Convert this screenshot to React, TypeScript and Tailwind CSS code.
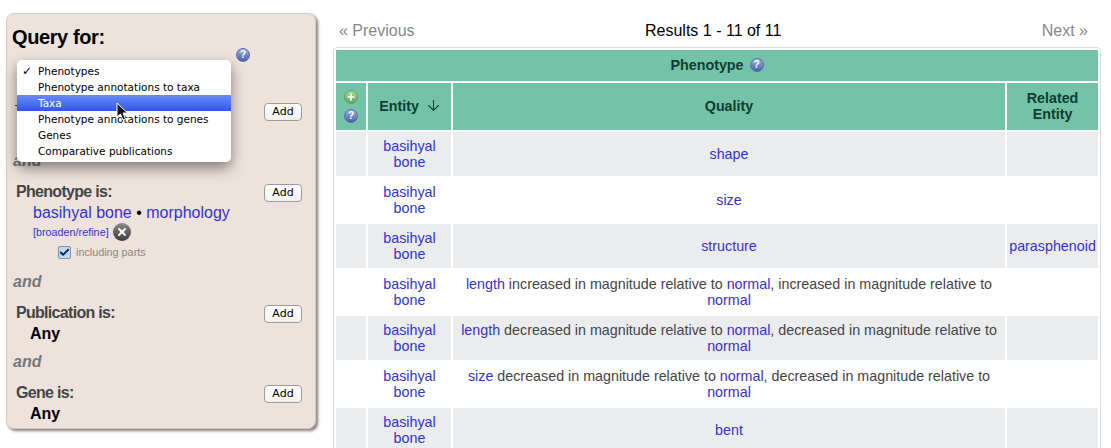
import { X, Plus, ArrowDown, Check } from 'lucide-react';

const SANS = { fontFamily: '"Liberation Sans", Arial, sans-serif' };

const MENU_ITEMS = [
  'Phenotypes',
  'Phenotype annotations to taxa',
  'Taxa',
  'Phenotype annotations to genes',
  'Genes',
  'Comparative publications',
];

const ROWS = [
  { quality: [['shape', true]], related: '' },
  { quality: [['size', true]], related: '' },
  { quality: [['structure', true]], related: 'parasphenoid' },
  {
    quality: [
      ['length', true],
      [' increased in magnitude relative to ', false],
      ['normal', true],
      [', increased in magnitude relative to ', false],
      ['normal', true],
    ],
    related: '',
  },
  {
    quality: [
      ['length', true],
      [' decreased in magnitude relative to ', false],
      ['normal', true],
      [', decreased in magnitude relative to ', false],
      ['normal', true],
    ],
    related: '',
  },
  {
    quality: [
      ['size', true],
      [' decreased in magnitude relative to ', false],
      ['normal', true],
      [', decreased in magnitude relative to ', false],
      ['normal', true],
    ],
    related: '',
  },
  { quality: [['bent', true]], related: '' },
] as const;

function HelpIcon() {
  return (
    <span className="flex h-[14px] w-[14px] items-center justify-center rounded-full border border-[#5a70a8] bg-gradient-to-b from-[#9db2dc] to-[#4c62a8] text-[10px] leading-none font-bold text-white">
      ?
    </span>
  );
}

function AddButton() {
  return (
    <button
      className="flex h-[18px] w-[38px] items-center justify-center rounded-[4px] border border-[#a09a96] bg-gradient-to-b from-white to-[#f1f1f1] text-[11px] text-black"
      style={{ fontFamily: '"DejaVu Sans", sans-serif' }}
    >
      Add
    </button>
  );
}

function GroupHeader({ label }: { label: string }) {
  return (
    <div className="flex items-center justify-between pr-[13px] pl-[9px]">
      <span className="pb-[2px] text-[16px] leading-[18px] font-bold tracking-[-0.7px] text-[#444]">{label}</span>
      <AddButton />
    </div>
  );
}

function And() {
  return <p className="pl-[6px] text-[16px] leading-[20px] font-bold text-[#777] italic">and</p>;
}

function Sidebar() {
  return (
    <aside className="relative mt-[13px] ml-[6px] h-[416px] w-[310px] shrink-0 rounded-[8px] border border-[#d8c9be] bg-[#ede2dc] shadow-[2px_2px_3px_rgba(70,60,50,0.65)]">
      <h1 className="mt-[11px] pl-[5px] text-[20px] leading-[24px] font-bold tracking-[-0.4px] text-black">Query for:</h1>
      <div className="mt-[-1px] flex justify-end pr-[65px]">
        <HelpIcon />
      </div>

      <div className="mt-[41px] flex items-center justify-between pr-[13px] pl-[8px]">
        <span className="mb-[14px] h-[1px] w-[3px] bg-[#444]" />
        <AddButton />
      </div>
      <div className="mt-[30px]">
        <And />
      </div>

      <div className="mt-[12px]">
        <GroupHeader label="Phenotype is:" />
        <p className="pl-[26px] text-[16px] leading-[20px] text-[#3333cc]">
          basihyal bone <span className="text-black">•</span> morphology
        </p>
        <div className="flex items-center gap-[4px] pl-[26px]">
          <span className="text-[10.8px] leading-[18px] text-[#3333cc]">[broaden/refine]</span>
          <span className="flex h-[18px] w-[18px] items-center justify-center rounded-full bg-gradient-to-b from-[#8a8a8a] to-[#3d3d3d]">
            <X className="h-[12px] w-[12px] text-white" strokeWidth={4} />
          </span>
        </div>
        <div className="mt-[2px] flex h-[18px] items-center gap-[5px] pl-[51px]">
          <span className="flex h-[13px] w-[13px] items-center justify-center rounded-[2px] border border-[#7d93b5] bg-[#bcd8f4]">
            <Check className="h-[15px] w-[15px] text-[#10204a]" strokeWidth={4} />
          </span>
          <span className="text-[10.8px] leading-[16px] text-[#888]">including parts</span>
        </div>
      </div>

      <div className="mt-[11px]">
        <And />
      </div>

      <div className="mt-[12px]">
        <GroupHeader label="Publication is:" />
        <p className="pl-[23px] text-[16px] leading-[20px] font-bold text-black">Any</p>
      </div>
      <div className="mt-[8px]">
        <And />
      </div>
      <div className="mt-[12px]">
        <GroupHeader label="Gene is:" />
        <p className="pl-[23px] text-[16px] leading-[20px] font-bold text-black">Any</p>
      </div>

      {/* Open select menu */}
      <div
        className="absolute top-[46px] left-[10px] w-[214px] rounded-[5px] bg-white py-[3px] text-[10.5px] leading-[16px] text-black shadow-[0_6px_14px_rgba(0,0,0,0.45)]"
        style={{ fontFamily: '"DejaVu Sans", sans-serif' }}
      >
        {MENU_ITEMS.map((item, i) => (
          <div
            key={item}
            className={
              item === 'Taxa'
                ? 'relative h-[16px] bg-gradient-to-b from-[#6a8bf5] to-[#2f55ee] pl-[21px] text-white'
                : 'relative h-[16px] pl-[21px]'
            }
          >
            {i === 0 && <span className="absolute left-[5px] text-[12px] font-bold">✓</span>}
            {item}
          </div>
        ))}
      </div>

      {/* Mouse pointer */}
      <svg className="absolute top-[88px] left-[109px]" width="14" height="20" viewBox="0 0 14 20">
        <path d="M1 1 L1 15 L4.5 12 L7 18 L9.5 17 L7 11 L11.5 11 Z" fill="#111" stroke="#fff" strokeWidth="1" />
      </svg>
    </aside>
  );
}

function Results() {
  return (
    <main className="mt-[21px] ml-[17px] w-[768px] shrink-0">
      <div className="flex h-[26px] items-start pr-[13px] pl-[6px] text-[16px] leading-[20px]">
        <span className="w-[306px] text-[#888]">« Previous</span>
        <span className="text-black">Results 1 - 11 of 11</span>
        <span className="ml-auto text-[#888]">Next »</span>
      </div>
      <div className="rounded-t-[4px] border border-[#ddd] bg-white">
        <table className="w-[766px] table-fixed border-separate border-spacing-[2px] text-center text-[14.3px] leading-[16px]">
          <colgroup>
            <col className="w-[30px]" />
            <col className="w-[83px]" />
            <col className="w-[552px]" />
            <col className="w-[91px]" />
          </colgroup>
          <thead className="font-bold text-[#0f3d33]">
            <tr className="bg-[#74c3a9]">
              <th colSpan={4} className="h-[31px] pb-[2px]">
                <span className="inline-flex items-center gap-[6px]">
                  Phenotype <HelpIcon />
                </span>
              </th>
            </tr>
            <tr className="bg-[#74c3a9]">
              <th className="h-[47px]">
                <span className="flex flex-col items-center gap-[5px]">
                  <span className="flex h-[14px] w-[14px] items-center justify-center rounded-full border border-[#5f9e5f] bg-gradient-to-b from-[#a6d89a] to-[#5da85d]">
                    <Plus className="h-[10px] w-[10px] text-white" strokeWidth={4} />
                  </span>
                  <HelpIcon />
                </span>
              </th>
              <th className="pb-[2px] pl-[2px]">
                <span className="inline-flex items-center gap-[6px]">
                  Entity <ArrowDown className="h-[17px] w-[17px]" strokeWidth={1.5} />
                </span>
              </th>
              <th className="pb-[2px]">Quality</th>
              <th className="pb-[2px]">Related Entity</th>
            </tr>
          </thead>
          <tbody className="text-[#3333cc]">
            {ROWS.map((row, i) => (
              <tr key={i} className={i % 2 === 0 ? 'bg-[#ebecee]' : 'bg-white'}>
                <td className="h-[44px]" />
                <td>basihyal bone</td>
                <td className="px-[6px]">
                  {row.quality.map(([text, link], j) => (
                    <span key={j} className={link ? '' : 'text-[#444]'}>
                      {text}
                    </span>
                  ))}
                </td>
                <td className="whitespace-nowrap">{row.related}</td>
              </tr>
            ))}
          </tbody>
        </table>
      </div>
    </main>
  );
}

export default function App() {
  return (
    <div className="flex h-[448px] w-[1111px] overflow-hidden bg-white" style={SANS}>
      <Sidebar />
      <Results />
    </div>
  );
}
